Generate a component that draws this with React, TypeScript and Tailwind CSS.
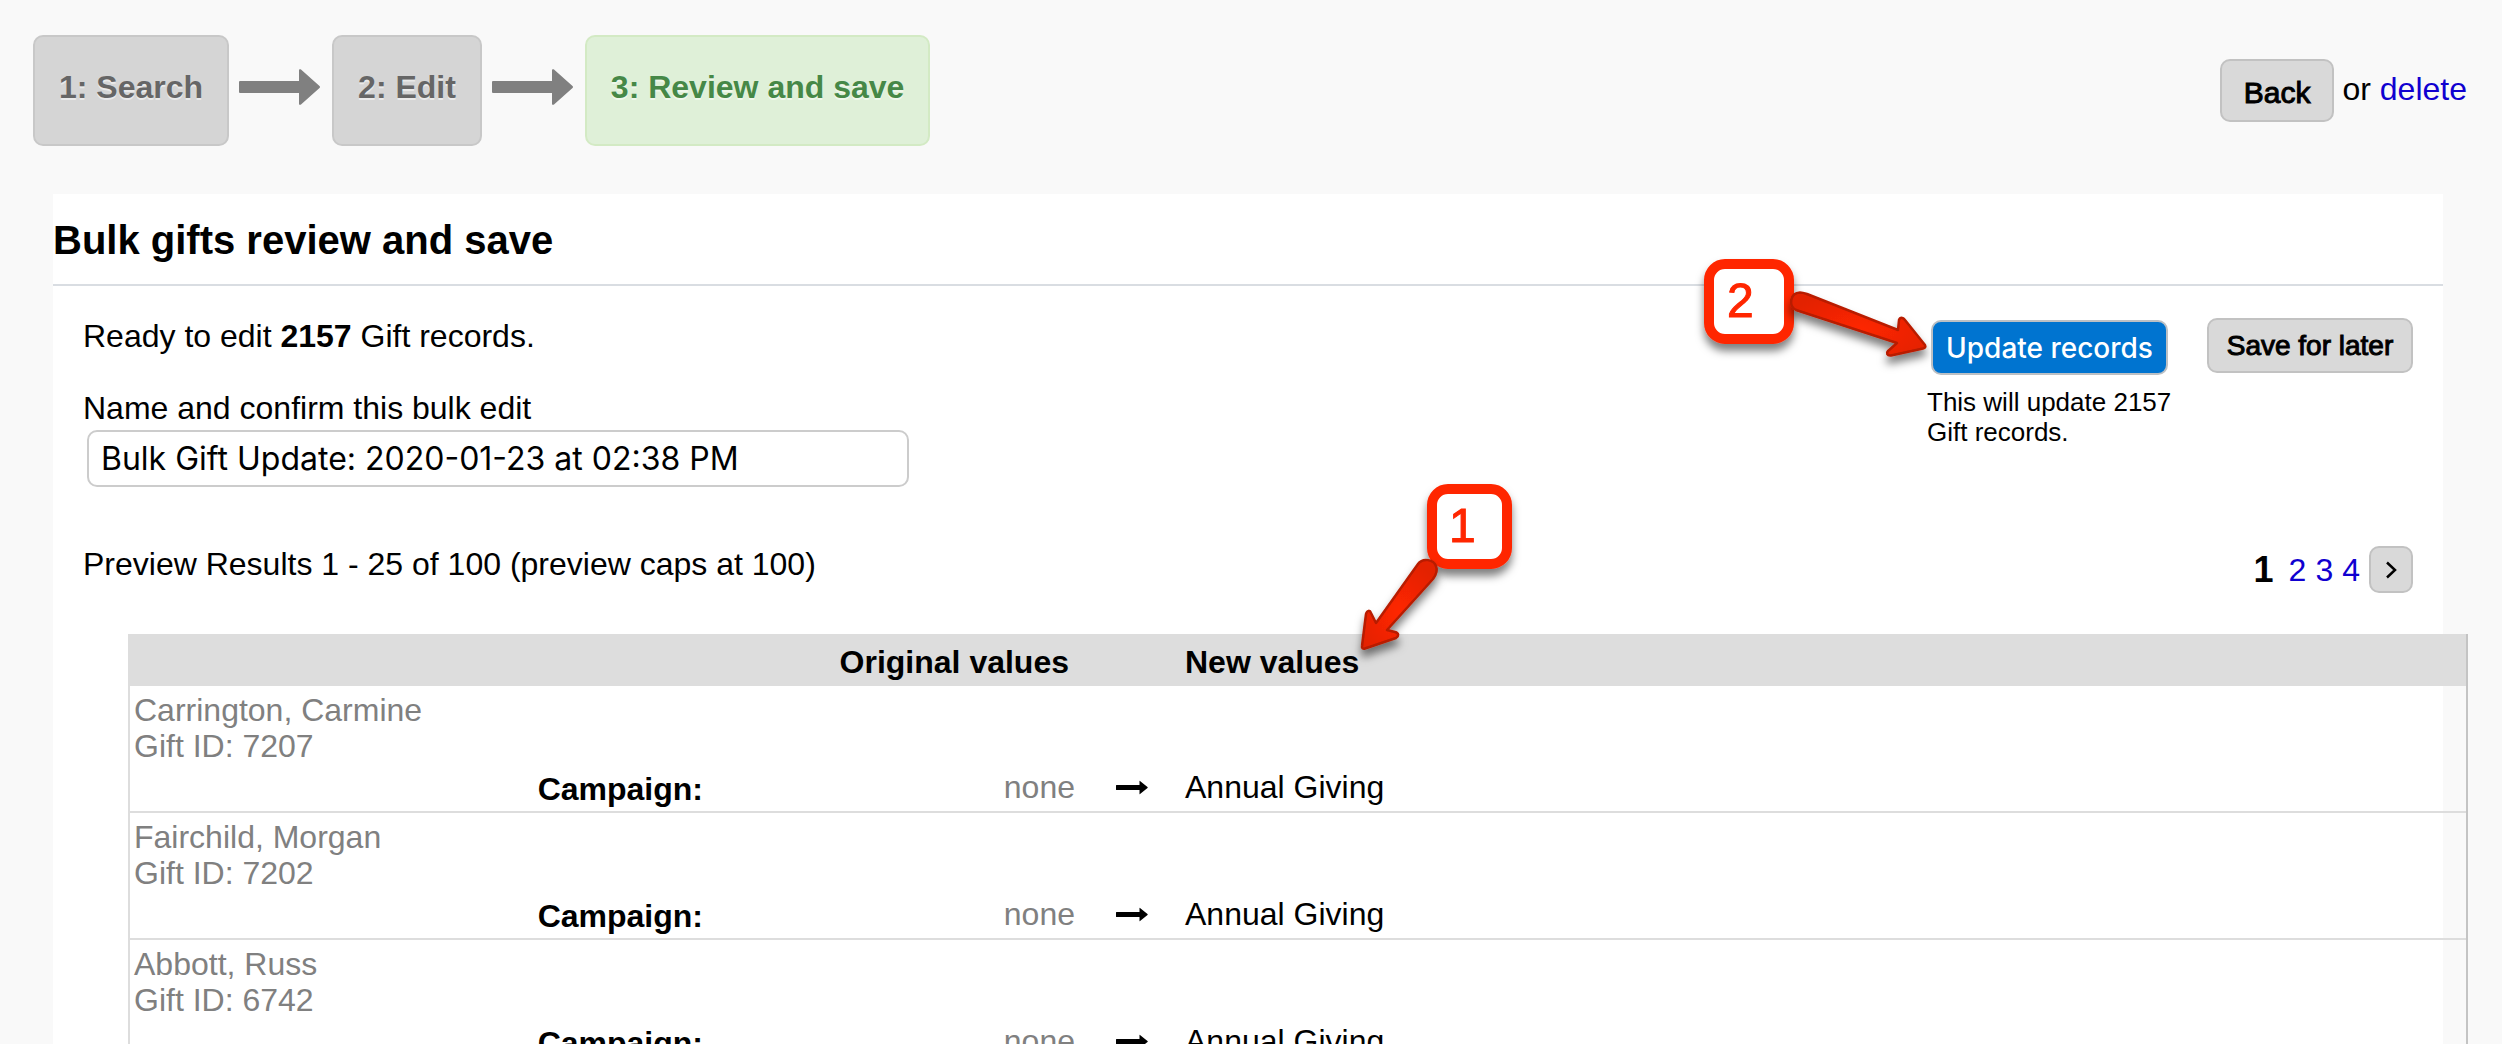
import { useState } from "react";
import clsx from "clsx";

const records = [
  { id: 7207, name: "Carrington, Carmine", campaign: "Annual Giving" },
  { id: 7202, name: "Fairchild, Morgan", campaign: "Annual Giving" },
  { id: 6742, name: "Abbott, Russ", campaign: "Annual Giving" },
];

function StepArrow() {
  return (
    <svg
      width="81"
      height="36"
      viewBox="0 0 81 36"
      className="mt-[34px] mr-3 ml-2.5 shrink-0 self-start"
      fill="#808080"
      aria-hidden="true"
    >
      <path d="M1 12H60V1C60 0 61.500 0 62 .5L80.500 17Q81.500 18 80.500 19L62 35.500C61.500 36 60 36 60 35V24H1Q0 24 0 23V13Q0 12 1 12Z" />
    </svg>
  );
}

function Step({ label, active }: { label: string; active?: boolean }) {
  return (
    <li
      className={clsx(
        "rounded-[10px] border-2 px-6 pt-8 pb-[39px] leading-9 font-bold whitespace-nowrap [text-shadow:0_2px_0_rgba(255,255,255,0.5)]",
        active
          ? "border-[#d3eac4] bg-[#dff0d8] text-[#468847]"
          : "border-[#c8c8c8] bg-[#d5d5d5] text-[#666666]"
      )}
    >
      {label}
    </li>
  );
}

function CalloutDefs({ id }: { id: string }) {
  return (
    <defs>
      <filter id={id + "-shadow"} x="-20%" y="-20%" width="150%" height="160%">
        <feDropShadow dx="0" dy="7" stdDeviation="4" floodColor="#000" floodOpacity="0.5" />
      </filter>
      <radialGradient id={id + "-fill"} cx="50%" cy="60%" r="60%">
        <stop offset="0" stopColor="#ff2600" />
        <stop offset="1" stopColor="#e32200" />
      </radialGradient>
    </defs>
  );
}

// points at the "New values" column
function CalloutOne() {
  return (
    <svg
      width="176"
      height="196"
      viewBox="0 0 176 196"
      className="pointer-events-none absolute -top-40 left-[170px]"
    >
      <CalloutDefs id="one" />
      <g filter="url(#one-shadow)">
        <rect x="81" y="15" width="75" height="75" rx="16" fill="#fff" stroke="#ff2600" strokeWidth="10" />
        <text x="98" y="68" fontSize="48" fontWeight="400" fill="#ff2600" stroke="#ff2600">
          1
        </text>
      </g>
      <path
        d="M67 90C72 83 83 86 85 92C87 97 85 101 82 105L36 156L44 158C48 159 48 162 45 164L14 174.500C12 175 10.500 174 11 172L15 140C16 136 19 136 20 139L25 149Z"
        fill="url(#one-fill)"
        stroke="#b81c00"
        strokeWidth="2.500"
        strokeLinejoin="round"
        filter="url(#one-shadow)"
      />
    </svg>
  );
}

// points at the update button
function CalloutTwo() {
  return (
    <svg
      width="237"
      height="130"
      viewBox="0 0 237 130"
      className="pointer-events-none absolute -top-[70px] right-full max-w-none"
    >
      <CalloutDefs id="two" />
      <g filter="url(#two-shadow)">
        <rect x="15" y="14" width="80" height="75" rx="16" fill="#fff" stroke="#ff2600" strokeWidth="10" />
        <text x="33" y="67" fontSize="48" fontWeight="400" fill="#ff2600" stroke="#ff2600">
          2
        </text>
      </g>
      <path
        d="M102 60C94 56 96 43 106 42.500C108 42.500 110 43 113 44L204 80L205 70C206 67 209 67 211 70L231 95C232 97 231 98 229 98.500L197 105.500C193 106 192 103 194 101L203 93Z"
        fill="url(#two-fill)"
        stroke="#b81c00"
        strokeWidth="2.500"
        strokeLinejoin="round"
        filter="url(#two-shadow)"
      />
    </svg>
  );
}

export default function App() {
  const [name, setName] = useState("Bulk Gift Update: 2020-01-23 at 02:38 PM");

  return (
    <div className="h-screen overflow-hidden bg-[#f9f9f9] font-['Liberation_Sans',Arial,sans-serif] text-[32px] leading-9 text-black">
      <header className="flex items-center justify-between pt-[35px] pr-[35px] pl-[33px]">
        <ol className="flex">
          <Step label="1: Search" />
          <StepArrow />
          <Step label="2: Edit" />
          <StepArrow />
          <Step label="3: Review and save" active />
        </ol>

        <div className="flex items-center gap-2">
          <button className="rounded-[10px] border-2 border-[#c2c2c2] bg-[#d9d9d9] px-[22px] pt-3.5 pb-[9px] text-[30px] [-webkit-text-stroke:1px]">
            Back
          </button>
          <span className="pb-1">
            or{" "}
            <a href="#delete" className="text-[#1000d0]">
              delete
            </a>
          </span>
        </div>
      </header>

      <main className="mt-12 mr-[59px] ml-[53px] bg-white">
        <h1 className="border-b-2 border-[#d9dde2] pt-[26px] pb-6 text-[40px] leading-10 font-bold">
          Bulk gifts review and save
        </h1>

        <div className="flex items-start justify-between px-[30px] pt-8">
          <div>
            <p>
              Ready to edit <b>2157</b> Gift records.
            </p>
            <label htmlFor="edit-name" className="mt-9 block">
              Name and confirm this bulk edit
            </label>
            <input
              id="edit-name"
              type="text"
              value={name}
              onChange={(e) => setName(e.target.value)}
              className="mt-1 ml-1 block h-[57px] w-[822px] rounded-[10px] border-2 border-[#cccccc] bg-white px-3 font-['Inter',sans-serif]"
            />
          </div>

          <div className="flex items-start gap-8">
            <div className="w-[248px] pt-0.5">
              <div className="relative ml-1 w-fit">
                <button className="block h-[55px] w-[237px] rounded-[10px] border-2 border-[#bcc0c4] bg-[#0074d0] font-['Inter',sans-serif] text-[28px] font-medium whitespace-nowrap text-white">
                  Update records
                </button>
                <CalloutTwo />
              </div>
              <p className="mt-3 text-[26px] leading-[30px]">
                This will update 2157 Gift records.
              </p>
            </div>
            <button className="h-[55px] w-[206px] rounded-[10px] border-2 border-[#c2c2c2] bg-[#d9d9d9] text-[28px] whitespace-nowrap [-webkit-text-stroke:1px]">
              Save for later
            </button>
          </div>
        </div>

        <div className="mt-[59px] flex items-start justify-between px-[30px]">
          <p>Preview Results 1 - 25 of 100 (preview caps at 100)</p>
          <nav className="flex items-center gap-[9px]">
            <b className="mr-1.5 text-[36px]">1</b>
            <a href="#page-2" className="text-[#1000d0]">2</a>
            <a href="#page-3" className="text-[#1000d0]">3</a>
            <a href="#page-4" className="text-[#1000d0]">4</a>
            <button
              aria-label="Next page"
              className="flex h-[47px] w-11 items-center justify-center rounded-[10px] border-2 border-[#c2c2c2] bg-[#d9d9d9]"
            >
              <svg width="12" height="18" viewBox="0 0 12 18" fill="none" stroke="#000" strokeWidth="2.500">
                <path d="M2 1.500L10 9L2 16.500" />
              </svg>
            </button>
          </nav>
        </div>

        <div className="mt-[41px] -mr-[25px] ml-[75px]">
          <table className="w-full table-fixed border-separate border-spacing-0 border-r-2 border-l-2 border-r-[#c4c4c4] border-l-[#dddddd]">
            <colgroup>
              <col className="w-[577px]" />
              <col className="w-[372px]" />
              <col className="w-[102px]" />
              <col />
            </colgroup>
            <thead>
              <tr className="bg-[#dddddd]">
                <th />
                <th className="pt-2.5 pr-2.5 pb-1.5 text-right">Original values</th>
                <th />
                <th className="relative pt-2.5 pb-1.5 pl-1 text-left">
                  New values
                  <CalloutOne />
                </th>
              </tr>
            </thead>
            {records.map((record) => (
              <tbody key={record.id}>
                <tr>
                  <td colSpan={4} className="px-1 pt-1.5 text-[#808080]">
                    {record.name}
                    <br />
                    Gift ID: {record.id}
                  </td>
                </tr>
                <tr className="*:border-b-2 *:border-[#dddddd]">
                  <th className="px-1 pt-[7px] pb-1 text-right">Campaign:</th>
                  <td className="px-1 pt-[5px] text-right align-top text-[#808080]">none</td>
                  <td className="pt-[5px] pl-1 align-top">
                    <svg width="32" height="36" viewBox="0 0 32 36" className="mx-auto">
                      <path d="M0 16.500Q0 16 .5 16H23.500V12Q23.500 11.500 24 12L31.500 18Q32 18.500 31.500 19L24 25Q23.500 25.500 23.500 25V21H.5Q0 21 0 20.500Z" fill="#000" />
                    </svg>
                  </td>
                  <td className="px-1 pt-[5px] align-top">{record.campaign}</td>
                </tr>
              </tbody>
            ))}
          </table>
        </div>
      </main>
    </div>
  );
}
